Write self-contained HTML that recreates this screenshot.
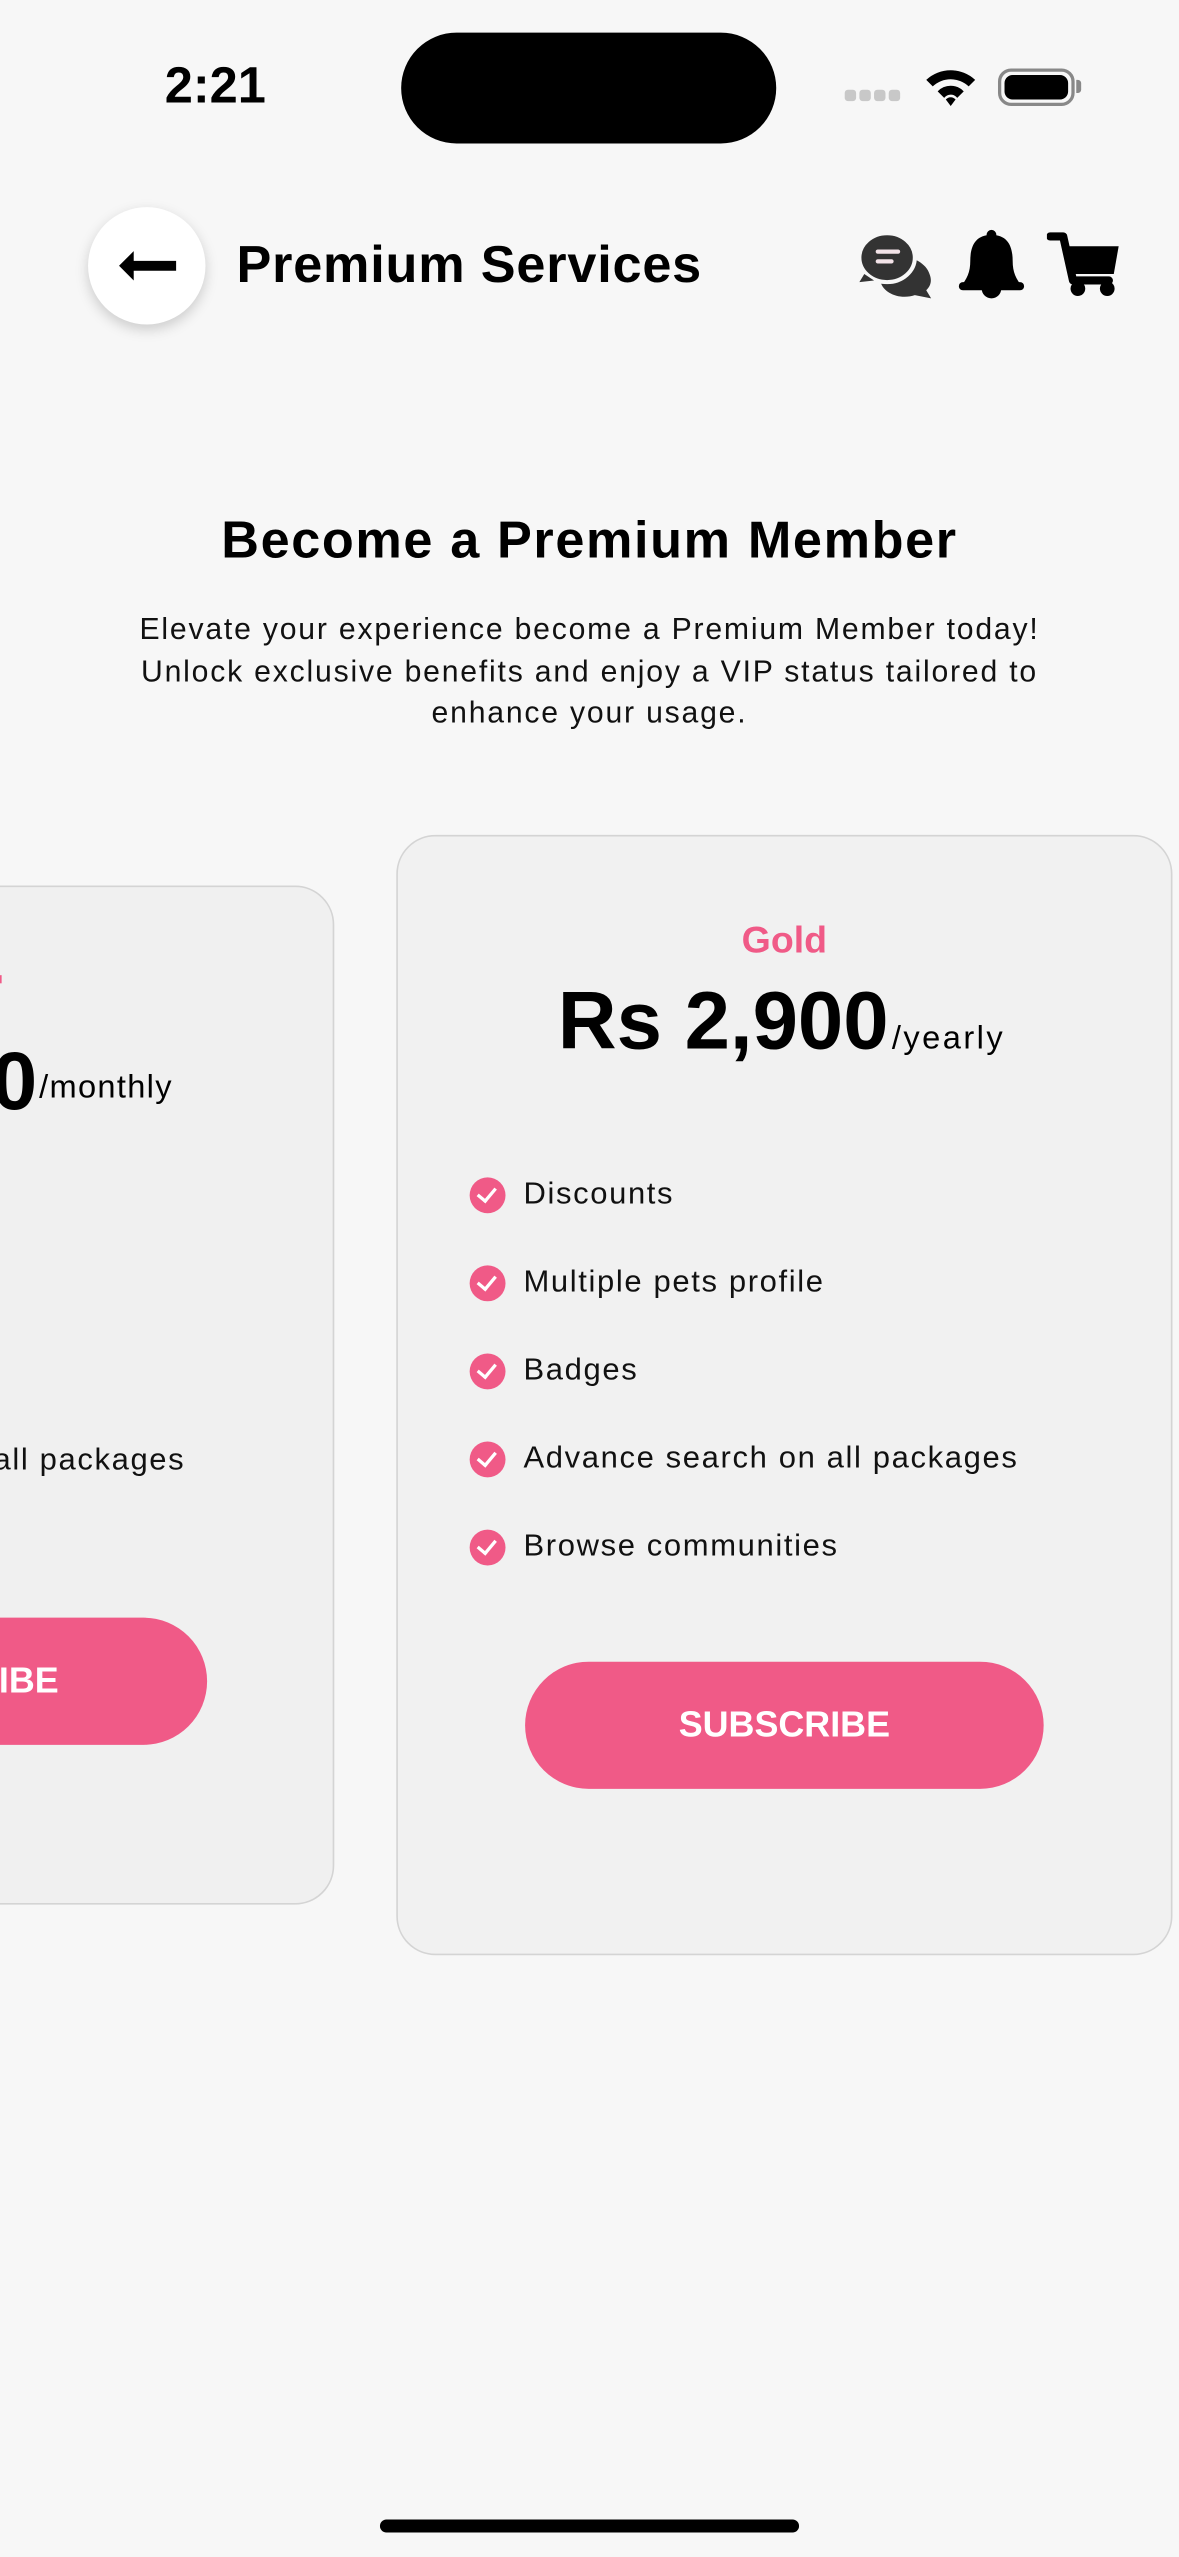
<!DOCTYPE html>
<html><head><meta charset="utf-8"><style>
html,body{margin:0;padding:0;background:#f7f7f7;width:1179px;height:2556px;overflow:hidden}
#s{position:absolute;left:0;top:0;width:723px;height:1568px;transform:scale(1.63071);transform-origin:0 0;font-family:"Liberation Sans",sans-serif;color:#000}
.a{position:absolute;white-space:nowrap}
.card{position:absolute;border:1.5px solid #d4d4d4;border-radius:24px;box-sizing:border-box}
.chk{position:absolute;width:22px;height:22px;border-radius:50%;background:#f05a87}
.chk:after{content:"";position:absolute;left:7px;top:4px;width:5px;height:9px;border:solid #fff;border-width:0 2px 2px 0;transform:rotate(40deg)}
.ft{position:absolute;font-size:19px;color:#111;letter-spacing:1px}
.btn{position:absolute;background:#f05a87;border-radius:40px;color:#fff;font-weight:bold;font-size:22px;text-align:center;line-height:78px;height:78px}
</style></head><body><div id="s">
<div class="a" style="left:101px;top:35px;font-size:31px;font-weight:bold">2:21</div>
<div class="a" style="left:246px;top:20px;width:230px;height:68px;border-radius:34px;background:#000"></div>
<div class="a" style="left:518px;top:54px;line-height:7px">
<span style="display:inline-block;width:7px;height:7px;border-radius:2px;background:#c8c8c8;margin-right:2px"></span><span style="display:inline-block;width:7px;height:7px;border-radius:2px;background:#c8c8c8;margin-right:2px"></span><span style="display:inline-block;width:7px;height:7px;border-radius:2px;background:#c8c8c8;margin-right:2px"></span><span style="display:inline-block;width:7px;height:7px;border-radius:2px;background:#c8c8c8"></span></div>
<svg class="a" style="left:566px;top:40px" width="34" height="26" viewBox="0 0 34 26"><path d="M2 9 A22 22 0 0 1 32 9 L28 13 A16 16 0 0 0 6 13Z M9 16 A11 11 0 0 1 25 16 L21 20 A5 5 0 0 0 13 20Z M14 21 L17 25 L20 21 A4 4 0 0 0 14 21Z" fill="#000"/></svg>
<div class="a" style="left:612px;top:42px;width:47px;height:23px;border:2px solid #888;border-radius:8px;box-sizing:border-box"></div>
<div class="a" style="left:616px;top:46px;width:39px;height:15px;background:#000;border-radius:5px"></div>
<div class="a" style="left:660px;top:49px;width:3px;height:8px;background:#888;border-radius:0 2px 2px 0"></div>

<div class="a" style="left:54px;top:127px;width:72px;height:72px;border-radius:50%;background:#fff;box-shadow:0 3px 8px rgba(0,0,0,.18)"></div>
<svg class="a" style="left:72px;top:153px" width="38" height="20" viewBox="0 0 38 20"><path d="M1 10 L10 1 L10 7 L36 7 L36 13 L10 13 L10 19Z" fill="#000"/></svg>
<div class="a" style="left:145px;top:144px;font-size:32px;font-weight:bold;letter-spacing:.5px">Premium Services</div>

<svg class="a" style="left:526px;top:140px" width="48" height="46" viewBox="0 0 48 46"><path d="M22 17 C32 16 42 21 44 28 C46 33 44 36 42 38 L45 43 L35 41 C26 44 16 40 14 33 Z" fill="#333"/><ellipse cx="18" cy="18" rx="17" ry="15" fill="#333" stroke="#f7f7f7" stroke-width="2.5"/><path d="M4 28 L1 33 L10 32Z" fill="#333"/><rect x="11" y="13" width="15" height="2.6" rx="1.3" fill="#f3e3e8"/><rect x="11" y="19" width="11" height="2.6" rx="1.3" fill="#f3e3e8"/></svg>
<svg class="a" style="left:587px;top:140px" width="42" height="46" viewBox="0 0 42 46"><circle cx="21" cy="4" r="3" fill="#000"/><path d="M21 4 C11 4 8 11 8 20 C8 27 6 31 2 36 L40 36 C36 31 34 27 34 20 C34 11 31 4 21 4Z M15 37 A6 6 0 0 0 27 37Z" fill="#000"/><rect x="1" y="33" width="40" height="5" rx="2.5" fill="#000"/></svg>
<svg class="a" style="left:642px;top:142px" width="46" height="42" viewBox="0 0 46 42"><path d="M2 3 L10 3 L16 30 L38 30" fill="none" stroke="#000" stroke-width="5" stroke-linecap="round" stroke-linejoin="round"/><path d="M11 9 L44 9 L41 26 L15 26Z" fill="#000"/><circle cx="19" cy="35" r="4.5" fill="#000"/><circle cx="37" cy="35" r="4.5" fill="#000"/></svg>

<div class="a" style="left:0;width:723px;top:313px;text-align:center;font-size:32px;font-weight:bold;letter-spacing:1px">Become a Premium Member</div>
<div class="a" style="left:0;width:723px;top:373px;text-align:center;font-size:18.5px;line-height:25.5px;white-space:normal;color:#111;letter-spacing:1.1px">Elevate your experience become a Premium Member today!<br>Unlock exclusive benefits and enjoy a VIP status tailored to<br>enhance your usage.</div>

<div class="card" style="left:-300px;top:543px;width:505px;height:625px;background:#f0f0f0"></div>
<div class="a" style="left:-2px;top:598px;width:3px;height:5px;background:#f05a87"></div>
<div class="a" style="left:-5px;top:634px;font-size:50px;font-weight:bold">0</div>
<div class="a" style="left:24px;top:656px;font-size:20px;letter-spacing:.8px">/monthly</div>
<div class="a" style="left:-4px;top:885px;font-size:19px;color:#111;letter-spacing:1px">all packages</div>
<div class="btn" style="left:-200px;top:992px;width:327px;text-align:right"><span style="position:relative;left:-91px">IBE</span></div>

<div class="card" style="left:243px;top:512px;width:476px;height:687px;background:#f1f1f1"></div>
<div class="a" style="left:243px;width:476px;top:563px;text-align:center;font-size:23px;font-weight:bold;color:#f05a87">Gold</div>
<div class="a" style="left:342px;top:597px;font-size:50px;font-weight:bold">Rs 2,900<span style="font-size:20px;font-weight:normal;letter-spacing:1.5px;margin-left:2px">/yearly</span></div>

<div class="chk" style="left:288px;top:722px"></div><div class="ft" style="left:321px;top:722px">Discounts</div>
<div class="chk" style="left:288px;top:776px"></div><div class="ft" style="left:321px;top:776px">Multiple pets profile</div>
<div class="chk" style="left:288px;top:830px"></div><div class="ft" style="left:321px;top:830px">Badges</div>
<div class="chk" style="left:288px;top:884px"></div><div class="ft" style="left:321px;top:884px">Advance search on all packages</div>
<div class="chk" style="left:288px;top:938px"></div><div class="ft" style="left:321px;top:938px">Browse communities</div>
<div class="btn" style="left:322px;top:1019px;width:318px">SUBSCRIBE</div>

<div class="a" style="left:233px;top:1545px;width:257px;height:8px;border-radius:4px;background:#000"></div>
</div></body></html>
